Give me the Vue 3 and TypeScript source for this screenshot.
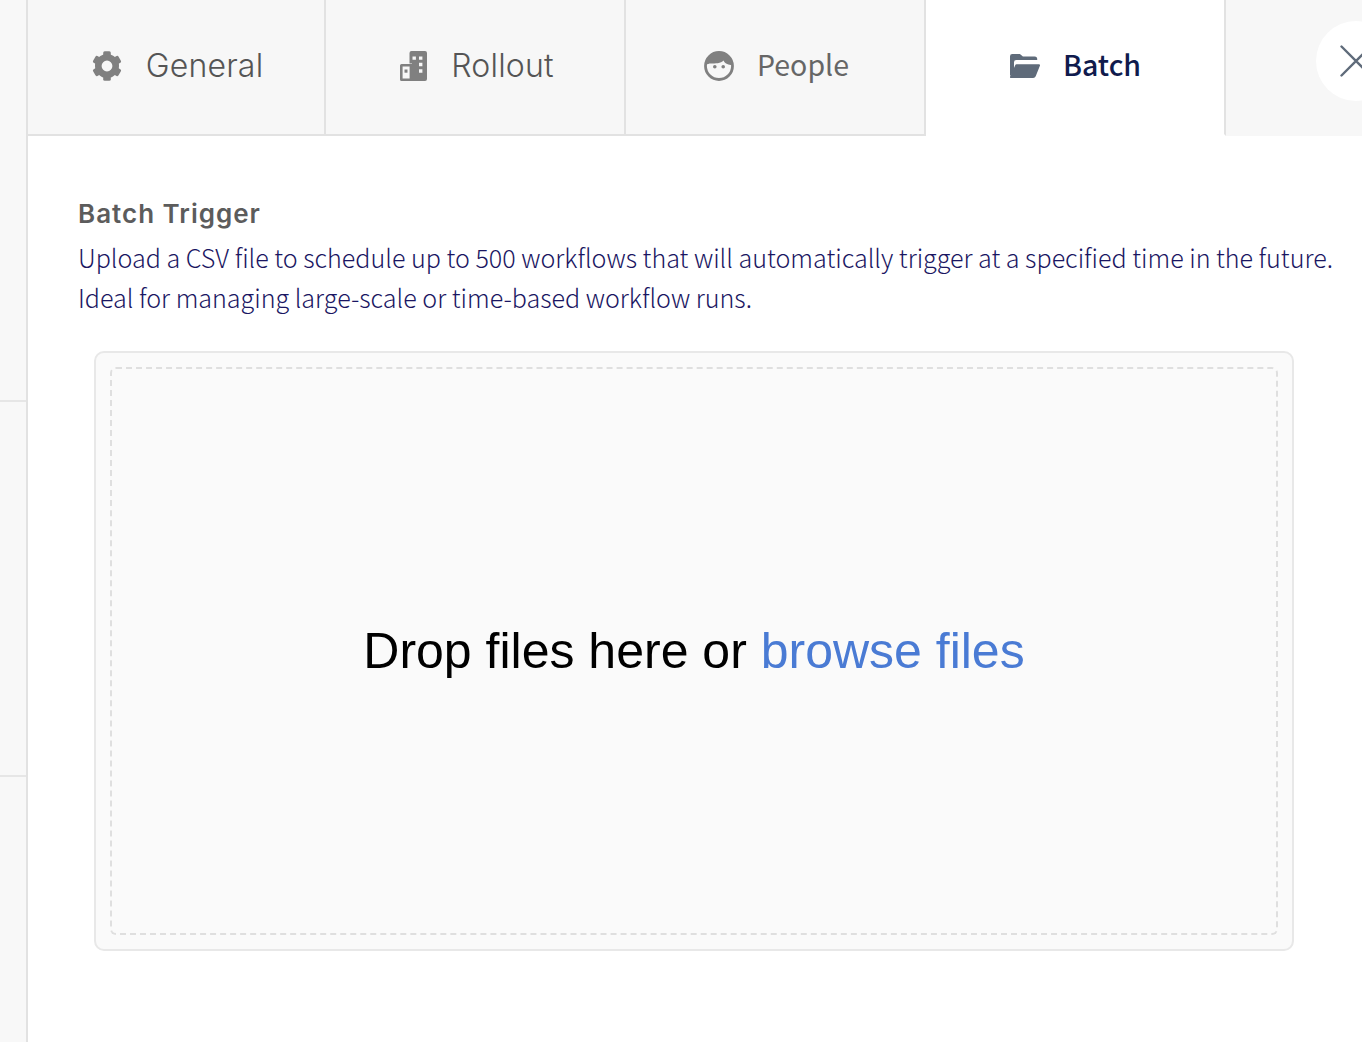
<script setup lang="ts">
interface Tab {
  id: string
  label: string
  active?: boolean
}
const tabs: Tab[] = [
  { id: 'general', label: 'General' },
  { id: 'rollout', label: 'Rollout' },
  { id: 'people', label: 'People' },
  { id: 'batch', label: 'Batch', active: true },
]
const gearTeeth: number[] = [0, 60, 120, 180, 240, 300]
</script>

<template>
  <div class="page">
    <aside class="rail">
      <div class="rail-a"></div>
      <div class="rail-b"></div>
      <div class="rail-c"></div>
    </aside>
    <main class="panel">
      <nav class="tabs">
        <div v-for="t in tabs" :key="t.id" class="tab" :class="['tab-' + t.id, { active: t.active }]">
          <svg v-if="t.id === 'general'" class="ico" viewBox="0 0 30 30">
            <circle cx="15" cy="15" r="8.700" fill="none" stroke="#808080" stroke-width="6.600" />
            <rect v-for="a in gearTeeth" :key="a" x="11.200" y="0.300" width="7.600" height="6" rx="1.500" fill="#808080" :transform="`rotate(${a} 15 15)`" />
          </svg>
          <svg v-else-if="t.id === 'rollout'" class="ico ico-rollout" viewBox="0 0 27 30">
            <path fill="#808080" fill-rule="evenodd" d="M9.500 2a2 2 0 0 1 2-2h13.500a2 2 0 0 1 2 2v26a2 2 0 0 1-2 2H12V12.500H9.500zM12.500 5.400v3.400h3.400V5.400zM19 5.400v3.400h3.400V5.400zM19 11.800v3.400h3.400v-3.400zM19 18.300v3.400h3.400v-3.400z" />
            <path fill="#808080" fill-rule="evenodd" d="M1.500 13h10.500v17H1.500a1.500 1.500 0 0 1-1.500-1.500V14.500a1.500 1.500 0 0 1 1.500-1.500zM2.600 15.600v11.800h7v-11.800z" />
            <path fill="#808080" d="M4.500 18.500h3v3.200h-3z" />
          </svg>
          <svg v-else-if="t.id === 'people'" class="ico" viewBox="0 0 30 30">
            <circle cx="15" cy="15" r="13.500" fill="none" stroke="#808080" stroke-width="2.800" />
            <path fill="#808080" d="M2 14C3 6 9 1.500 15 1.500S27 6 28 14C25 14 21 13 19.500 9.500C17 12.500 11 12.500 7 12.500C5 12.500 3.500 13 2 14z" />
            <circle cx="10.800" cy="15.800" r="1.800" fill="#808080" />
            <circle cx="19.200" cy="15.800" r="1.800" fill="#808080" />
          </svg>
          <svg v-else class="ico ico-folder" viewBox="0 0 30 24">
            <path fill="#5f6b7a" d="M2.300 0h7.600l3 2.600h11.800a2.500 2.500 0 0 1 2.500 2.500v1H6.200a2.200 2.200 0 0 0-2.200 2.200v8.900L0 22V2.300A2.300 2.300 0 0 1 2.300 0z" />
            <path fill="#5f6b7a" d="M6.600 10.300H29a1 1 0 0 1 .9 1.400l-4.200 10.500a2.800 2.800 0 0 1-2.600 1.800H1.300a1.200 1.200 0 0 1-1.100-1.700l4.900-10.800a1.700 1.700 0 0 1 1.500-1.200z" />
          </svg>
          <span class="tab-label">{{ t.label }}</span>
        </div>
        <div class="tabs-rest"></div>
      </nav>

      <section class="body">
        <h2 class="title">Batch Trigger</h2>
        <p class="desc">Upload a CSV file to schedule up to 500 workflows that will automatically trigger at a specified time in the future.<br />Ideal for managing large-scale or time-based workflow runs.</p>
        <div class="drop-outer">
          <div class="drop-inner">
            <span class="drop-text">Drop files here or <span class="browse">browse files</span></span>
          </div>
        </div>
      </section>
    </main>
    <button class="close" type="button" aria-label="Close">
      <svg viewBox="0 0 32 32" class="close-ico">
        <path d="M1.500 1.500L30.500 30.500M30.500 1.500L1.500 30.500" stroke="#5f6b7a" stroke-width="2.400" stroke-linecap="round" fill="none" />
      </svg>
    </button>
  </div>
</template>

<style>
html, body { margin: 0; background: #fff; overflow: hidden; }
</style>

<style scoped>
.page {
  position: relative;
  display: flex;
  width: 1362px;
  height: 1042px;
  overflow: hidden;
  background: #fff;
}
.rail {
  box-sizing: border-box;
  width: 28px;
  flex: none;
  display: flex;
  flex-direction: column;
  background: #f8f8f8;
  border-right: 2px solid #e2e2e2;
}
.rail-a { height: 402px; box-sizing: border-box; border-bottom: 2px solid #e6e6e6; }
.rail-b { height: 375px; box-sizing: border-box; border-bottom: 2px solid #e6e6e6; }
.rail-c { flex: 1; }
.panel { flex: 1; min-width: 0; display: flex; flex-direction: column; }
.tabs { display: flex; height: 136px; flex: none; }
.tab {
  box-sizing: border-box;
  width: 300px;
  flex: none;
  height: 136px;
  display: flex;
  align-items: center;
  justify-content: center;
  padding-bottom: 2px;
  gap: 24px;
  background: #f7f7f7;
  border-right: 2px solid #e2e2e2;
  border-bottom: 2px solid #e2e2e2;
  font-family: Inter, sans-serif;
  font-size: 32px;
  font-weight: 300;
  letter-spacing: 0.2px;
  color: #555;
}
.tab-general { width: 298px; padding-left: 3px; }
.tab-rollout { padding-left: 4px; }
.tab-people {
  padding-left: 3px;
  gap: 23px;
  font-family: "Noto Sans CJK SC", sans-serif;
  font-size: 28.500px;
  font-weight: 400;
  letter-spacing: 0;
  color: #666;
}
.tab.active {
  padding-left: 1px;
  gap: 23px;
  background: #fff;
  border-bottom-color: transparent;
  font-family: "Noto Sans CJK SC", sans-serif;
  font-size: 28.500px;
  font-weight: 500;
  letter-spacing: 0;
  color: #101b4d;
}
.tab-label { line-height: 40px; }
.tab-people .tab-label,
.tab.active .tab-label { margin-bottom: 4px; }
.ico { width: 30px; height: 30px; flex: none; }
.ico-rollout { width: 27px; }
.ico-folder { height: 24px; }
.tabs-rest { flex: 1; background: #f7f7f7; }
.body { flex: 1; padding: 60px 0 0 50px; }
.title {
  margin: 0;
  font-family: Inter, sans-serif;
  font-size: 26px;
  line-height: 36px;
  font-weight: 600;
  letter-spacing: 1px;
  color: #5c5c5c;
}
.desc {
  margin: 5px 0 0;
  font-family: "Noto Sans CJK SC", sans-serif;
  font-size: 25.090px;
  font-weight: 300;
  line-height: 40px;
  color: #1a1662;
  white-space: nowrap;
}
.drop-outer {
  box-sizing: border-box;
  width: 1200px;
  height: 600px;
  margin: 34px 0 0 16px;
  padding: 14px;
  background: #fafafa;
  border: 2px solid #e8e8e8;
  border-radius: 10px;
}
.drop-inner {
  box-sizing: border-box;
  height: 100%;
  display: flex;
  align-items: center;
  justify-content: center;
  border: 2px dashed #dfdfdf;
  border-radius: 6px;
}
.drop-text {
  font-family: "Liberation Sans", Arial, sans-serif;
  font-size: 50px;
  color: #000;
}
.browse { color: #4a7bd4; }
.close {
  position: absolute;
  left: 1316px;
  top: 21px;
  width: 80px;
  height: 80px;
  padding: 0;
  border: 0;
  border-radius: 50%;
  background: #fff;
  display: flex;
  align-items: center;
  justify-content: center;
}
.close-ico { width: 32px; height: 32px; }
</style>
